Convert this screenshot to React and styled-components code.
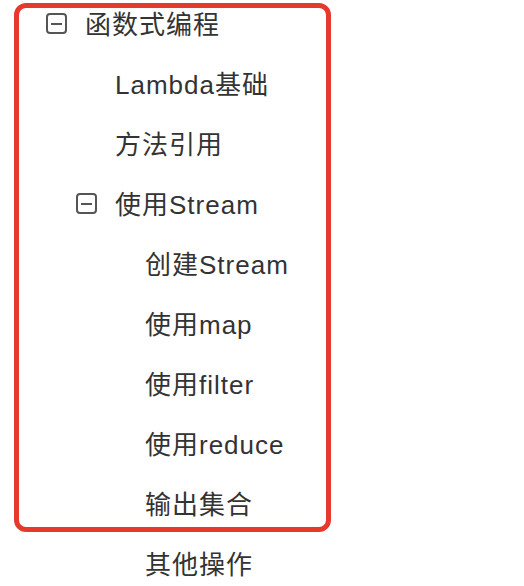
import styled, { createGlobalStyle } from "styled-components";

const GlobalStyle = createGlobalStyle`
  html, body {
    margin: 0;
    padding: 0;
    background: #fff;
  }
  body {
    font-family: "Liberation Sans", "Noto Sans CJK SC", sans-serif;
    overflow: hidden;
  }
`;

const Page = styled.div`
  position: relative;
  width: 524px;
  height: 586px;
  overflow: hidden;
`;

const Tree = styled.ul`
  list-style: none;
  margin: -8px 0 0;
  padding: 0;
`;

const Row = styled.li`
  position: relative;
  display: flex;
  align-items: center;
  height: 60px;
  padding-left: ${(props) => 85 + (props.level - 1) * 30}px;
  font-size: 26px;
  letter-spacing: 1px;
  color: #333;
  white-space: nowrap;
`;

const Toggle = styled.span`
  position: absolute;
  left: ${(props) => 46 + (props.level - 1) * 30}px;
  top: 50%;
  width: 21px;
  height: 21px;
  margin-top: -9px;
  box-sizing: border-box;
  border: 2px solid #555;
  border-radius: 4px;

  &::after {
    content: "";
    position: absolute;
    left: 3px;
    right: 3px;
    top: 7.5px;
    height: 2px;
    background: #555;
  }
`;

const Highlight = styled.div`
  position: absolute;
  left: 14px;
  top: 3px;
  width: 317px;
  height: 529px;
  box-sizing: border-box;
  border: 5px solid #e5392b;
  border-radius: 12px;
  pointer-events: none;
`;

const items = [
  { label: "函数式编程", level: 1, open: true },
  { label: "Lambda基础", level: 2 },
  { label: "方法引用", level: 2 },
  { label: "使用Stream", level: 2, open: true },
  { label: "创建Stream", level: 3 },
  { label: "使用map", level: 3 },
  { label: "使用filter", level: 3 },
  { label: "使用reduce", level: 3 },
  { label: "输出集合", level: 3 },
  { label: "其他操作", level: 3 },
];

const App = () => {
  return (
    <Page>
      <GlobalStyle />
      <Tree>
        {items.map((item) => (
          <Row key={item.label} level={item.level}>
            {item.open && <Toggle level={item.level} />}
            {item.label}
          </Row>
        ))}
      </Tree>
      <Highlight />
    </Page>
  );
};

export default App;
